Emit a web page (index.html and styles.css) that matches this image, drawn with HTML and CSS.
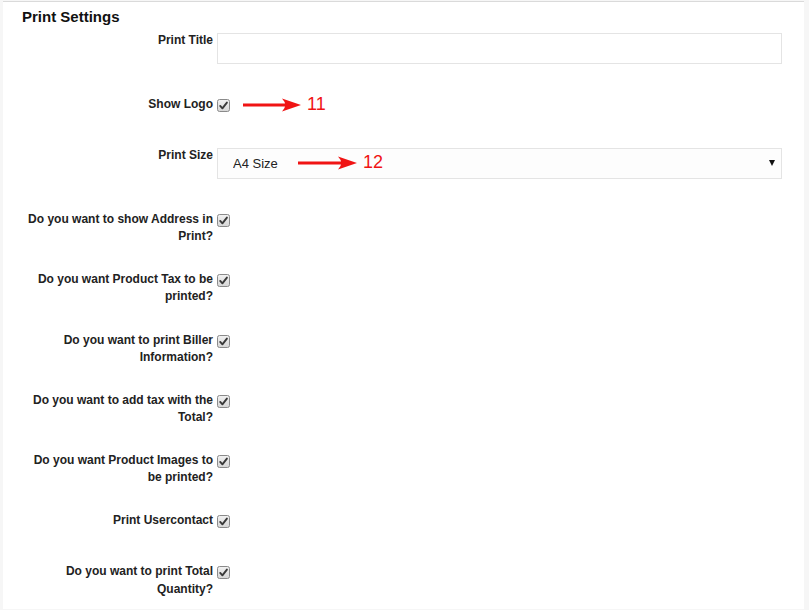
FILE: index.html
```html
<!DOCTYPE html>
<html lang="en">
<head>
    <meta charset="UTF-8">
    <meta name="viewport" content="width=device-width, initial-scale=1.0">
    <title>Print Settings</title>
    <link rel="stylesheet" href="styles.css">
</head>
<body>
    <div class="panel">
        <h3 class="panel-title">Print Settings</h3>
        <div class="settings">
            <div class="form-row">
                <label class="row-label" for="printTitle">Print Title</label>
                <div class="row-control">
                    <input type="text" id="printTitle" class="text-input">
                </div>
            </div>
            <div class="form-row">
                <label class="row-label">Show Logo</label>
                <div class="row-control">
                    <span class="check"><svg width="13" height="13" viewBox="0 0 13 13"><defs><linearGradient id="cb" x1="0" y1="0" x2="0" y2="1"><stop offset="0" stop-color="#f2f2f2"/><stop offset="1" stop-color="#d6d6d6"/></linearGradient></defs><rect x="0.5" y="0.5" width="12" height="12" rx="2" fill="url(#cb)" stroke="#8a8a8a"/><path d="M3.2 6.9 L5.4 9.3 L9.9 3.6" fill="none" stroke="#3a3a3a" stroke-width="1.9" stroke-linecap="round" stroke-linejoin="round"/></svg></span>
                    <span class="note note-inline">
                        <svg class="note-arrow" width="58" height="14" viewBox="0 0 58 14"><rect x="0" y="5.5" width="46" height="3" fill="#f01414"/><path d="M39 0.5 L58 7 L39 13.5 Q45.5 7 39 0.5 Z" fill="#f01414"/></svg>
                        <span class="note-num">11</span>
                    </span>
                </div>
            </div>
            <div class="form-row">
                <label class="row-label" for="printSize">Print Size</label>
                <div class="row-control">
                    <div class="select-wrap">
                        <select id="printSize" class="select-input">
                            <option>A4 Size</option>
                            <option>A5 Size</option>
                            <option>Thermal 80mm</option>
                        </select>
                        <span class="note note-over">
                            <svg class="note-arrow" width="59" height="14" viewBox="0 0 59 14"><rect x="0" y="5.5" width="47" height="3" fill="#f01414"/><path d="M40 0.5 L59 7 L40 13.5 Q46.5 7 40 0.5 Z" fill="#f01414"/></svg>
                            <span class="note-num">12</span>
                        </span>
                    </div>
                </div>
            </div>
            <div class="form-row">
                <label class="row-label">Do you want to show Address in Print?</label>
                <div class="row-control"><span class="check"><svg width="13" height="13" viewBox="0 0 13 13"><rect x="0.5" y="0.5" width="12" height="12" rx="2" fill="url(#cb)" stroke="#8a8a8a"/><path d="M3.2 6.9 L5.4 9.3 L9.9 3.6" fill="none" stroke="#3a3a3a" stroke-width="1.9" stroke-linecap="round" stroke-linejoin="round"/></svg></span></div>
            </div>
            <div class="form-row">
                <label class="row-label">Do you want Product Tax to be printed?</label>
                <div class="row-control"><span class="check"><svg width="13" height="13" viewBox="0 0 13 13"><rect x="0.5" y="0.5" width="12" height="12" rx="2" fill="url(#cb)" stroke="#8a8a8a"/><path d="M3.2 6.9 L5.4 9.3 L9.9 3.6" fill="none" stroke="#3a3a3a" stroke-width="1.9" stroke-linecap="round" stroke-linejoin="round"/></svg></span></div>
            </div>
            <div class="form-row">
                <label class="row-label">Do you want to print Biller Information?</label>
                <div class="row-control"><span class="check"><svg width="13" height="13" viewBox="0 0 13 13"><rect x="0.5" y="0.5" width="12" height="12" rx="2" fill="url(#cb)" stroke="#8a8a8a"/><path d="M3.2 6.9 L5.4 9.3 L9.9 3.6" fill="none" stroke="#3a3a3a" stroke-width="1.9" stroke-linecap="round" stroke-linejoin="round"/></svg></span></div>
            </div>
            <div class="form-row">
                <label class="row-label">Do you want to add tax with the Total?</label>
                <div class="row-control"><span class="check"><svg width="13" height="13" viewBox="0 0 13 13"><rect x="0.5" y="0.5" width="12" height="12" rx="2" fill="url(#cb)" stroke="#8a8a8a"/><path d="M3.2 6.9 L5.4 9.3 L9.9 3.6" fill="none" stroke="#3a3a3a" stroke-width="1.9" stroke-linecap="round" stroke-linejoin="round"/></svg></span></div>
            </div>
            <div class="form-row">
                <label class="row-label">Do you want Product Images to be printed?</label>
                <div class="row-control"><span class="check"><svg width="13" height="13" viewBox="0 0 13 13"><rect x="0.5" y="0.5" width="12" height="12" rx="2" fill="url(#cb)" stroke="#8a8a8a"/><path d="M3.2 6.9 L5.4 9.3 L9.9 3.6" fill="none" stroke="#3a3a3a" stroke-width="1.9" stroke-linecap="round" stroke-linejoin="round"/></svg></span></div>
            </div>
            <div class="form-row">
                <label class="row-label">Print Usercontact</label>
                <div class="row-control"><span class="check"><svg width="13" height="13" viewBox="0 0 13 13"><rect x="0.5" y="0.5" width="12" height="12" rx="2" fill="url(#cb)" stroke="#8a8a8a"/><path d="M3.2 6.9 L5.4 9.3 L9.9 3.6" fill="none" stroke="#3a3a3a" stroke-width="1.9" stroke-linecap="round" stroke-linejoin="round"/></svg></span></div>
            </div>
            <div class="form-row">
                <label class="row-label">Do you want to print Total Quantity?</label>
                <div class="row-control"><span class="check"><svg width="13" height="13" viewBox="0 0 13 13"><rect x="0.5" y="0.5" width="12" height="12" rx="2" fill="url(#cb)" stroke="#8a8a8a"/><path d="M3.2 6.9 L5.4 9.3 L9.9 3.6" fill="none" stroke="#3a3a3a" stroke-width="1.9" stroke-linecap="round" stroke-linejoin="round"/></svg></span></div>
            </div>
        </div>
    </div>
</body>
</html>
```

FILE: styles.css
```css
body {
    font-family: "Liberation Sans", Arial, sans-serif;
    background-color: #f6f6f6;
    color: #222;
    margin: 0;
    padding: 0;
}
.panel {
    margin: 1px 5px 0 3px;
    padding: 6px 22px 0 19px;
    border-top: 1px solid #dadada;
    background-color: #fff;
    min-height: calc(100vh - 2px);
    box-sizing: border-box;
}
.panel-title {
    margin: 0 0 6px;
    font-size: 15px;
    line-height: 18px;
    font-weight: bold;
    color: #111;
}
.settings {
    display: flex;
    flex-direction: column;
    gap: 26px;
}
.form-row {
    display: grid;
    grid-template-columns: 191px 1fr;
    column-gap: 4px;
    min-height: 25px;
}
.row-label {
    font-size: 12px;
    line-height: 1.42857;
    font-weight: bold;
    text-align: right;
}
.row-control {
    display: flex;
    align-items: flex-start;
}
.text-input, .select-input {
    display: block;
    width: 100%;
    height: 31px;
    margin: 1px 0 6px;
    border: 1px solid #e4e4e4;
    background-color: #fff;
    box-sizing: border-box;
    font-family: inherit;
    font-size: 13px;
    color: #222;
}
.text-input {
    padding: 0 12px;
}
.select-wrap {
    position: relative;
    width: 100%;
}
.select-input {
    appearance: none;
    -webkit-appearance: none;
    padding: 0 15px;
    border-radius: 0;
    background-color: #fdfdfd;
}
.select-wrap::after {
    content: "";
    position: absolute;
    right: 7px;
    top: 13px;
    border-top: 6px solid #111;
    border-left: 3.5px solid transparent;
    border-right: 3.5px solid transparent;
}
.check {
    display: block;
    width: 13px;
    height: 13px;
    margin-top: 3px;
}
.check svg {
    display: block;
}
.note {
    display: flex;
    align-items: center;
    height: 17px;
    gap: 6px;
}
.note-inline {
    margin-left: 13px;
}
.note-over {
    position: absolute;
    left: 81px;
    top: 7px;
}
.note-arrow {
    display: block;
}
.note-num {
    font-size: 18px;
    line-height: 17px;
    color: #f01414;
}
```
